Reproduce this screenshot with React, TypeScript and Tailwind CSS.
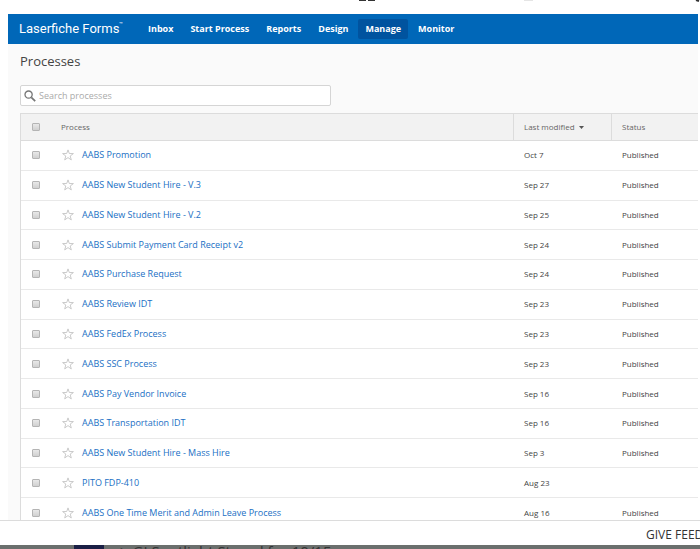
import { useState } from "react";

interface ProcessRow {
	name: string;
	modified: string;
	status: string;
}

const NAV_ITEMS = ["Inbox", "Start Process", "Reports", "Design", "Manage", "Monitor"];

const PROCESSES: ProcessRow[] = [
	{ name: "AABS Promotion", modified: "Oct 7", status: "Published" },
	{ name: "AABS New Student Hire - V.3", modified: "Sep 27", status: "Published" },
	{ name: "AABS New Student Hire - V.2", modified: "Sep 25", status: "Published" },
	{ name: "AABS Submit Payment Card Receipt v2", modified: "Sep 24", status: "Published" },
	{ name: "AABS Purchase Request", modified: "Sep 24", status: "Published" },
	{ name: "AABS Review IDT", modified: "Sep 23", status: "Published" },
	{ name: "AABS FedEx Process", modified: "Sep 23", status: "Published" },
	{ name: "AABS SSC Process", modified: "Sep 23", status: "Published" },
	{ name: "AABS Pay Vendor Invoice", modified: "Sep 16", status: "Published" },
	{ name: "AABS Transportation IDT", modified: "Sep 16", status: "Published" },
	{ name: "AABS New Student Hire - Mass Hire", modified: "Sep 3", status: "Published" },
	{ name: "PITO FDP-410", modified: "Aug 23", status: "" },
	{ name: "AABS One Time Merit and Admin Leave Process", modified: "Aug 16", status: "Published" },
];

function SearchIcon() {
	return (
		<svg viewBox="0 0 12 12" className="h-3 w-3 shrink-0" fill="none" stroke="#777" aria-hidden="true">
			<circle cx="4.6" cy="4.6" r="3.6" strokeWidth="1.3" />
			<path d="M7.3 7.3 11.2 11.2" strokeWidth="1.7" />
		</svg>
	);
}

function StarIcon() {
	return (
		<svg viewBox="0 0 12 12" className="h-3 w-3" fill="#fff" stroke="#c4c4c4" strokeWidth="0.9" aria-hidden="true">
			<path d="M6 .9 7.3 4.5 11.4 4.6 8.2 7 9.3 10.9 6 8.6 2.7 10.9 3.8 7 .6 4.6 4.7 4.5Z" />
		</svg>
	);
}

function RowCheckbox({ label }: { label: string }) {
	return (
		<input
			type="checkbox"
			aria-label={label}
			className="block h-2 w-2 appearance-none rounded-[1px] border border-[#b4b4b4] bg-linear-to-b from-[#e8e8e8] to-[#d0d0d0] checked:bg-[#0067b8]"
		/>
	);
}

function TopBar() {
	return (
		<header className="flex h-[30px] items-center bg-[#0067b8] pl-[11px] text-white">
			<a href="#home" className="flex w-[122px] shrink-0 whitespace-nowrap font-[Roboto,sans-serif] text-[13px] leading-4">
				Laserfiche Forms
				<span className="text-[6px] leading-[6px]">™</span>
			</a>
			<nav className="flex gap-[3px]">
				{NAV_ITEMS.map((item) => (
					<a
						key={item}
						href={`#${item}`}
						className={
							item === "Manage"
								? "whitespace-nowrap rounded-xs bg-[#00539f] px-[7px] text-[9px] font-bold leading-5"
								: "whitespace-nowrap px-[7px] text-[9px] font-bold leading-5"
						}
					>
						{item}
					</a>
				))}
			</nav>
		</header>
	);
}

function ProcessTable() {
	return (
		<table className="h-[415px] w-full table-fixed border-separate border-spacing-0 border-l border-[#dcdcdc] bg-white text-left text-[8px] leading-3 text-[#444]">
			<colgroup>
				<col className="w-10" />
				<col />
				<col className="w-[98px]" />
				<col className="w-[87px]" />
			</colgroup>
			<thead>
				<tr className="h-7 bg-[#f2f2f2] text-[#666]">
					<th className="border-y border-[#dcdcdc] pl-[11px]">
						<RowCheckbox label="Select all processes" />
					</th>
					<th className="border-y border-[#dcdcdc] font-normal">Process</th>
					<th className="border-y border-l border-[#dcdcdc] pl-[10px] font-normal">
						<button type="button" className="flex items-center gap-1">
							Last modified
							<svg viewBox="0 0 5 3" className="h-[3px] w-[5px]" fill="#555" aria-hidden="true">
								<path d="M0 0h5L2.5 3Z" />
							</svg>
						</button>
					</th>
					<th className="border-y border-l border-[#dcdcdc] pl-[10px] font-normal">Status</th>
				</tr>
			</thead>
			<tbody>
				{PROCESSES.map((row) => (
					<tr key={row.name}>
						<td className="border-b border-[#e9e9e9] pl-[11px]">
							<RowCheckbox label={`Select ${row.name}`} />
						</td>
						<td className="border-b border-[#e9e9e9]">
							<div className="flex items-center gap-2 pl-px">
								<button type="button" aria-label={`Favorite ${row.name}`}>
									<StarIcon />
								</button>
								<a href="#process" className="text-[9px] text-[#1a6fc4]">
									{row.name}
								</a>
							</div>
						</td>
						<td className="border-b border-[#e9e9e9] pl-[11px]">{row.modified}</td>
						<td className="border-b border-[#e9e9e9] pl-[11px]">{row.status}</td>
					</tr>
				))}
			</tbody>
		</table>
	);
}

export default function App() {
	const [query, setQuery] = useState("");

	return (
		<div className="flex h-screen flex-col overflow-hidden bg-white font-['Open_Sans',sans-serif]">
			{/* Edge of the page header behind the window */}
			<div className="flex h-[14px] shrink-0 items-start justify-end">
				<svg viewBox="0 0 341 4" className="h-1 w-[341px]" fill="none" aria-hidden="true">
					<path d="M0 0h7M9 0h7" stroke="#333" strokeWidth="2" />
					<path d="M165 0h9" stroke="#ccc" strokeWidth="1" />
					<path d="M337 0l3 1" stroke="#333" strokeWidth="2" />
				</svg>
			</div>

			<div className="mr-[2px] ml-2 min-h-0 flex-1 overflow-hidden bg-[#fafafa]">
				<TopBar />
				<main className="pl-3">
					<h1 className="pt-[7px] text-[13px] leading-5 text-[#444]">Processes</h1>
					<label className="mt-[14px] mb-[7px] flex h-[21px] w-[311px] items-center gap-[3px] rounded-xs border border-[#d5d5d5] bg-white pl-[3px]">
						<SearchIcon />
						<input
							type="search"
							value={query}
							onChange={(e) => setQuery(e.target.value)}
							placeholder="Search processes"
							aria-label="Search processes"
							className="min-w-0 flex-1 text-[9px] leading-4 outline-none placeholder:text-[#aaa]"
						/>
					</label>
					<ProcessTable />
				</main>
			</div>

			<footer className="flex h-[25px] shrink-0 justify-end border-t border-[#dcdcdc]">
				<button type="button" className="w-[54px] whitespace-nowrap pt-1 text-left text-[12px] leading-5 text-[#333]">
					GIVE FEED
				</button>
			</footer>

			{/* Dimmed page showing under the window */}
			<div className="flex h-1 shrink-0 overflow-hidden bg-[#6b6f6d] pl-[74px]">
				<div className="h-1 w-[30px] shrink-0 bg-[#1a1f45]" />
				<p className="pl-4 text-[15px] leading-3 whitespace-nowrap text-[#333]">
					&gt; GI Spotlight Stored for 10/15
				</p>
			</div>
		</div>
	);
}
